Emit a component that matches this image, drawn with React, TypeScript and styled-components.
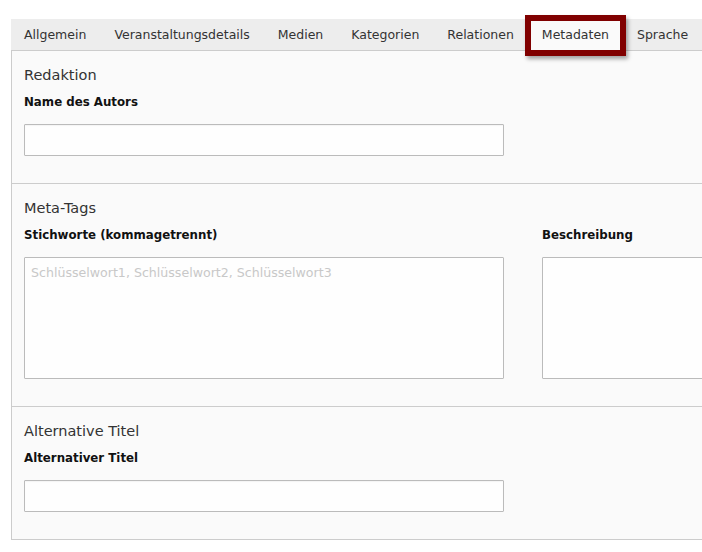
import React from 'react';
import styled, {createGlobalStyle} from 'styled-components';

const GlobalStyle = createGlobalStyle`
  html, body {
    margin: 0;
    padding: 0;
    background: #ffffff;
    overflow: hidden;
  }
  body {
    font-family: "DejaVu Sans", Verdana, sans-serif;
    color: #222;
  }
`;

const Page = styled.div`
  padding: 19px 0 0 11px;
  width: 1100px;
`;

const Panel = styled.div`
  width: 1000px;
`;

const TabBar = styled.div`
  display: flex;
  height: 31px;
  background: #ededed;
  border-bottom: 1px solid #cccccc;
`;

const Tab = styled.div<{active?: boolean; first?: boolean}>`
  position: relative;
  display: flex;
  align-items: center;
  padding: 0 14px 0 ${p => p.first ? '13px' : '14px'};
  font-size: 12.5px;
  color: #333;
  background: ${p => p.active ? '#fafafa' : 'transparent'};
  white-space: nowrap;
`;

const Highlight = styled.span`
  position: absolute;
  left: -3px;
  right: -3px;
  top: -4px;
  bottom: -6px;
  border: 6px solid #800000;
  box-shadow: 2px 3px 4px rgba(0, 0, 0, 0.35);
  pointer-events: none;
`;

const Content = styled.div`
  background: #fafafa;
  border-left: 1px solid #cccccc;
  border-bottom: 1px solid #cccccc;
`;

const Section = styled.section<{last?: boolean}>`
  padding: 14px 0 27px 12px;
  border-bottom: ${p => p.last ? 'none' : '1px solid #cccccc'};
`;

const Heading = styled.h3`
  margin: 0;
  font-size: 14.5px;
  line-height: 20px;
  font-weight: normal;
  color: #333;
`;

const Fields = styled.div`
  display: grid;
  grid-template-columns: 480px 480px;
  column-gap: 38px;
`;

const Field = styled.div`
  display: flex;
  flex-direction: column;
`;

const Label = styled.label`
  margin-top: 9px;
  font-size: 11.8px;
  line-height: 16px;
  font-weight: bold;
  color: #111;
`;

const TextInput = styled.input`
  box-sizing: border-box;
  margin-top: 14px;
  width: 480px;
  height: 32px;
  border: 1px solid #bbbbbb;
  border-radius: 1px;
  background: #fefefe;
  box-shadow: inset 0 1px 1px rgba(0, 0, 0, 0.04);
  font-family: "DejaVu Sans", Verdana, sans-serif;
  font-size: 12.6px;
  padding: 0 6px;
  outline: none;
`;

const TextArea = styled.textarea`
  box-sizing: border-box;
  margin-top: 14px;
  width: 480px;
  height: 122px;
  border: 1px solid #bbbbbb;
  border-radius: 1px;
  background: #fefefe;
  font-family: "DejaVu Sans", Verdana, sans-serif;
  font-size: 12.6px;
  line-height: 16px;
  padding: 7px 6px;
  resize: none;
  outline: none;
  &::placeholder {
    color: #c8c8c8;
  }
`;

const tabs = ['Allgemein', 'Veranstaltungsdetails', 'Medien', 'Kategorien', 'Relationen', 'Metadaten', 'Sprache'];

const App = () => {
    return (
        <Page>
            <GlobalStyle/>
            <Panel>
                <TabBar>
                    {tabs.map((t, i) => (
                        <Tab key={t} first={i === 0} active={t === 'Metadaten'}>
                            {t}
                            {t === 'Metadaten' && <Highlight/>}
                        </Tab>
                    ))}
                </TabBar>
                <Content>
                    <Section>
                        <Heading>Redaktion</Heading>
                        <Field>
                            <Label>Name des Autors</Label>
                            <TextInput type="text"/>
                        </Field>
                    </Section>
                    <Section>
                        <Heading>Meta-Tags</Heading>
                        <Fields>
                            <Field>
                                <Label>Stichworte (kommagetrennt)</Label>
                                <TextArea placeholder="Schlüsselwort1, Schlüsselwort2, Schlüsselwort3"/>
                            </Field>
                            <Field>
                                <Label>Beschreibung</Label>
                                <TextArea/>
                            </Field>
                        </Fields>
                    </Section>
                    <Section last>
                        <Heading>Alternative Titel</Heading>
                        <Field>
                            <Label>Alternativer Titel</Label>
                            <TextInput type="text"/>
                        </Field>
                    </Section>
                </Content>
            </Panel>
        </Page>
    );
};

export default App;
